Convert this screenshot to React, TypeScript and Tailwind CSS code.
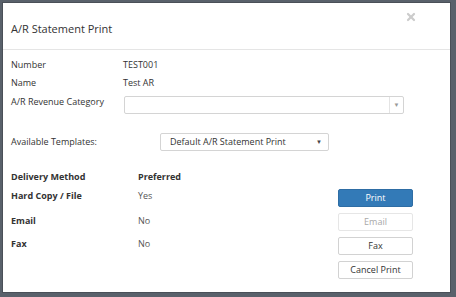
import { X } from "lucide-react";

const methods = [
  { name: "Hard Copy / File", preferred: "Yes", h: "h-[24px]" },
  { name: "Email", preferred: "No", h: "h-[26px]" },
  { name: "Fax", preferred: "No", h: "h-[20px]" },
];

function Btn({ label, variant }: { label: string; variant: "primary" | "disabled" | "default" }) {
  const cls =
    variant === "primary"
      ? "bg-[#337ab7] border-[#2e6da4] text-white"
      : variant === "disabled"
      ? "bg-white border-[#e6e6e6] text-[#a8a8a8]"
      : "bg-white border-[#d2d2d2] text-[#333333]";
  return (
    <div className={`h-[18px] w-[75px] rounded-[2px] border flex items-center justify-center text-[9px] ${cls}`}>
      {label}
    </div>
  );
}

export default function App() {
  return (
    <div
      className="w-[456px] h-[297px] bg-[#59616b] pl-[2px] pt-[2px] overflow-hidden"
      style={{ fontFamily: '"Open Sans", "Noto Sans", sans-serif' }}
    >
      <div className="w-[449px] h-[291px] bg-white border border-[#4a5058] flex flex-col text-[#333333]">
        <div className="relative h-[47px] border-b border-[#e5e5e5] flex items-center pl-[8px] pt-[6px] text-[11px]">
          A/R Statement Print
          <X className="absolute right-[33px] top-[8px] text-[#cccccc]" size={12} strokeWidth={4.5} />
        </div>

        <div className="pl-[8px] pt-[6px] text-[9px]">
          <div className="flex h-[18px] items-center">
            <span className="w-[112px]">Number</span>
            <span>TEST001</span>
          </div>
          <div className="flex h-[18px] items-center">
            <span className="w-[112px]">Name</span>
            <span>Test AR</span>
          </div>
          <div className="flex mt-[4px]">
            <span className="w-[113px] leading-[12px]">A/R Revenue Category</span>
            <div className="w-[280px] h-[18px] border border-[#d4d4d4] rounded-[2px] flex justify-end">
              <div className="w-[14px] border-l border-[#e4e4e4] flex items-center justify-center text-[6px] text-[#999999]">
                ▼
              </div>
            </div>
          </div>

          <div className="flex items-center mt-[19px]">
            <span className="w-[149px]">Available Templates:</span>
            <div className="w-[169px] h-[18px] border border-[#d4d4d4] rounded-[2px] flex items-center justify-between pl-[9px] pr-[6px]">
              <span>Default A/R Statement Print</span>
              <span className="text-[6px] text-[#444444]">▼</span>
            </div>
          </div>

          <div className="flex mt-[18px]">
            <div className="w-[327px]">
              <div className="flex font-bold h-[15px] items-center">
                <span className="w-[127px]">Delivery Method</span>
                <span>Preferred</span>
              </div>
              {methods.map((m) => (
                <div key={m.name} className={`flex items-center ${m.h}`}>
                  <span className="w-[127px] font-bold">{m.name}</span>
                  <span className="text-[#555555]">{m.preferred}</span>
                </div>
              ))}
            </div>
            <div className="flex flex-col gap-[6px] pt-[20px]">
              <Btn label="Print" variant="primary" />
              <Btn label="Email" variant="disabled" />
              <Btn label="Fax" variant="default" />
              <Btn label="Cancel Print" variant="default" />
            </div>
          </div>
        </div>
      </div>
    </div>
  );
}
